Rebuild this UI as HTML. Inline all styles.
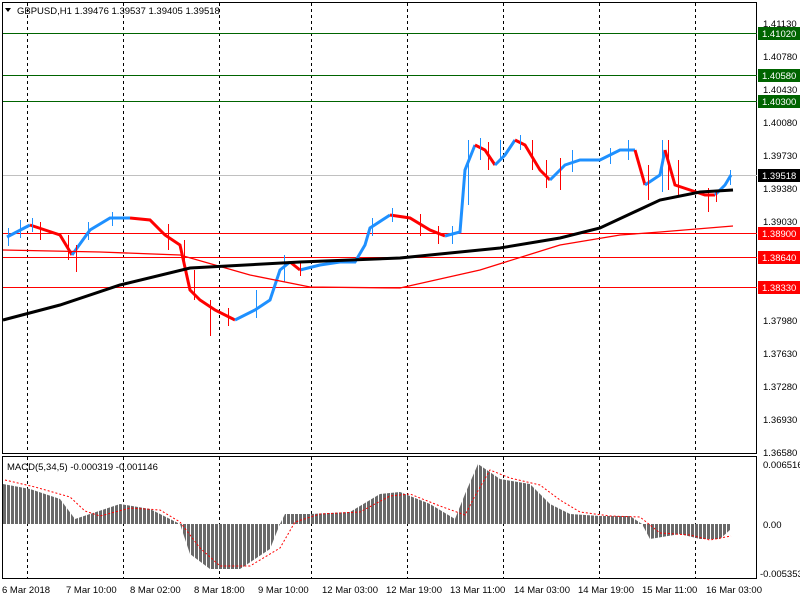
<!DOCTYPE html>
<html><head><meta charset="utf-8"><style>
html,body{margin:0;padding:0;background:#fff;width:800px;height:600px;overflow:hidden}
svg{display:block;font-family:"Liberation Sans",sans-serif;font-size:9.5px}
</style></head><body>
<svg width="800" height="600" xmlns="http://www.w3.org/2000/svg">
<defs>
<pattern id="st" x="3" y="0" width="4" height="10" patternUnits="userSpaceOnUse"><rect x="0" y="0" width="3" height="10" fill="#696969"/></pattern>
</defs>
<rect x="2.5" y="2.5" width="754" height="451" fill="none" stroke="#000"/>
<rect x="2.5" y="456.5" width="754" height="122" fill="none" stroke="#000"/>
<g stroke="#000" stroke-dasharray="3,3">
<line x1="27.5" y1="3" x2="27.5" y2="453"/><line x1="123.5" y1="3" x2="123.5" y2="453"/><line x1="219.5" y1="3" x2="219.5" y2="453"/><line x1="311.5" y1="3" x2="311.5" y2="453"/><line x1="407.5" y1="3" x2="407.5" y2="453"/><line x1="503.5" y1="3" x2="503.5" y2="453"/><line x1="599.5" y1="3" x2="599.5" y2="453"/><line x1="695.5" y1="3" x2="695.5" y2="453"/>
<line x1="27.5" y1="457" x2="27.5" y2="578"/><line x1="123.5" y1="457" x2="123.5" y2="578"/><line x1="219.5" y1="457" x2="219.5" y2="578"/><line x1="311.5" y1="457" x2="311.5" y2="578"/><line x1="407.5" y1="457" x2="407.5" y2="578"/><line x1="503.5" y1="457" x2="503.5" y2="578"/><line x1="599.5" y1="457" x2="599.5" y2="578"/><line x1="695.5" y1="457" x2="695.5" y2="578"/>
</g>
<g stroke-width="1">
<line x1="3" y1="33.5" x2="757" y2="33.5" stroke="#006400"/>
<line x1="3" y1="75.5" x2="757" y2="75.5" stroke="#006400"/>
<line x1="3" y1="101.5" x2="757" y2="101.5" stroke="#006400"/>
<line x1="3" y1="175.5" x2="757" y2="175.5" stroke="#c0c0c0"/>
<line x1="3" y1="233.5" x2="757" y2="233.5" stroke="#f00"/>
<line x1="3" y1="257.5" x2="757" y2="257.5" stroke="#f00"/>
<line x1="3" y1="287.5" x2="757" y2="287.5" stroke="#f00"/>
</g>
<g fill="none" stroke-width="3">
<polyline stroke="#1e90ff" points="7,237 30,225"/>
<polyline stroke="#f00" points="30,225 60,235 72,255"/>
<polyline stroke="#1e90ff" points="72,255 90,230 110,218 130,218"/>
<polyline stroke="#f00" points="130,218 150,220 165,235 180,245 190,290 200,300 215,310 235,320"/>
<polyline stroke="#1e90ff" points="235,320 255,310 270,300 280,270 290,262"/>
<polyline stroke="#f00" points="290,262 300,270"/>
<polyline stroke="#1e90ff" points="300,270 320,265 340,262 355,262 365,245 370,228 390,215"/>
<polyline stroke="#f00" points="390,215 410,218 430,230 445,236"/>
<polyline stroke="#1e90ff" points="445,236 460,232 465,170 475,145"/>
<polyline stroke="#f00" points="475,145 485,150 495,165"/>
<polyline stroke="#1e90ff" points="495,165 505,155 515,140"/>
<polyline stroke="#f00" points="515,140 525,145 540,170 550,180"/>
<polyline stroke="#1e90ff" points="550,180 565,165 580,160 600,160 620,150 635,150"/>
<polyline stroke="#f00" points="635,150 645,185"/>
<polyline stroke="#1e90ff" points="645,185 660,175 665,150"/>
<polyline stroke="#f00" points="665,150 675,185 690,190 705,195 715,195"/>
<polyline stroke="#1e90ff" points="715,195 725,185 731,175"/>
</g>
<path fill="none" stroke="#1e90ff" d="M8.5 228V246M20.5 220V238M32.5 218V232M88.5 222V240M112.5 212V226M284.5 255V282M372.5 218V236M392.5 208V222M452.5 226V244M468.5 140V205M480.5 138V160M500.5 140V160M520.5 135V150M572.5 150V172M610.5 148V164M628.5 140V160M662.5 140V192M730.5 170V185M256.5 290V318"/>
<path fill="none" stroke="#f00" d="M40.5 222V240M76.5 245V272M68.5 235V260M168.5 224V250M184.5 240V262M194.5 270V300M210.5 300V336M228.5 308V326M300.5 262V276M420.5 214V236M438.5 226V244M488.5 142V170M532.5 140V170M546.5 160V188M560.5 158V190M648.5 165V200M668.5 140V190M678.5 160V196M708.5 188V212M716.5 190V202"/>
<polyline fill="none" stroke="#f00" stroke-width="1.3" points="3,250 100,252 180,255 250,275 310,287 400,288 480,270 560,245 620,235 660,232 733,226"/>
<polyline fill="none" stroke="#000" stroke-width="3" points="3,320 60,305 120,285 190,268 300,262 400,258 500,248 560,238 600,228 660,200 700,192 733,190"/>
<polygon fill="url(#st)" points="3,524 3,484 30,489 60,499 75,519 90,514 120,504 150,509 170,519 180,524 190,554 210,569 240,569 270,549 280,524 285,514 310,514 350,512 380,494 400,492 430,504 455,519 465,494 478,464 500,479 530,484 550,504 570,514 600,516 630,516 642,524 650,539 680,534 700,539 720,539 731,529 731,524"/>
<polyline fill="none" stroke="#f00" stroke-dasharray="2,2" points="5,480 35,487 70,497 85,511 100,516 130,508 160,510 180,522 200,548 220,566 250,566 280,548 295,522 320,514 360,512 390,496 410,494 440,506 465,515 475,496 490,470 510,478 540,485 560,500 580,512 610,516 640,517 660,533 690,535 710,540 731,536"/>
<path d="M5 8 L11 8 L8 12Z" fill="#000"/>
<text x="17" y="14" fill="#000">GBPUSD,H1  1.39476 1.39537 1.39405 1.39518</text>
<text x="7" y="470" fill="#000">MACD(5,34,5) -0.000319 -0.001146</text>
<g fill="#000">
<text x="763" y="27">1.41130</text><text x="763" y="60">1.40780</text><text x="763" y="93">1.40430</text><text x="763" y="126">1.40080</text><text x="763" y="159">1.39730</text><text x="763" y="192">1.39380</text><text x="763" y="225">1.39030</text><text x="763" y="324">1.37980</text><text x="763" y="357">1.37630</text><text x="763" y="390">1.37280</text><text x="763" y="423">1.36930</text><text x="763" y="456">1.36580</text>
<text x="763" y="468">0.006516</text><text x="763" y="528">0.00</text><text x="760" y="577">-0.005353</text>
</g>
<rect x="758" y="27" width="42" height="13" fill="#006400"/><text x="762" y="37" fill="#fff">1.41020</text>
<rect x="758" y="69" width="42" height="13" fill="#006400"/><text x="762" y="79" fill="#fff">1.40580</text>
<rect x="758" y="95" width="42" height="13" fill="#006400"/><text x="762" y="105" fill="#fff">1.40300</text>
<rect x="758" y="169" width="42" height="13" fill="#000"/><text x="762" y="179" fill="#fff">1.39518</text>
<rect x="758" y="227" width="42" height="13" fill="#f00"/><text x="762" y="237" fill="#fff">1.38900</text>
<rect x="758" y="251" width="42" height="13" fill="#f00"/><text x="762" y="261" fill="#fff">1.38640</text>
<rect x="758" y="281" width="42" height="13" fill="#f00"/><text x="762" y="291" fill="#fff">1.38330</text>
<g fill="#000">
<text x="2" y="593">6 Mar 2018</text><text x="66" y="593">7 Mar 10:00</text><text x="130" y="593">8 Mar 02:00</text><text x="194" y="593">8 Mar 18:00</text><text x="258" y="593">9 Mar 10:00</text><text x="322" y="593">12 Mar 03:00</text><text x="386" y="593">12 Mar 19:00</text><text x="450" y="593">13 Mar 11:00</text><text x="514" y="593">14 Mar 03:00</text><text x="578" y="593">14 Mar 19:00</text><text x="642" y="593">15 Mar 11:00</text><text x="706" y="593">16 Mar 03:00</text>
</g>
</svg>
</body></html>
